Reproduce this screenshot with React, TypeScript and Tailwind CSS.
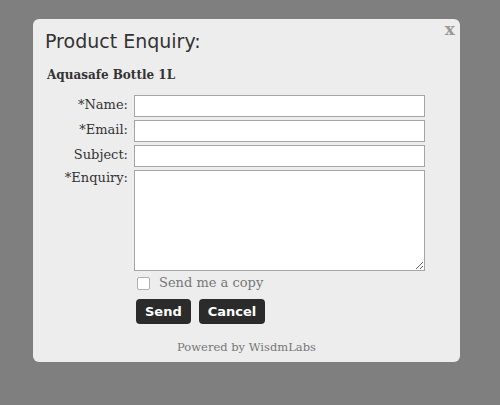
import React from "react";

const serif = { fontFamily: '"DejaVu Serif", "Liberation Serif", serif' };
const sans = { fontFamily: '"DejaVu Sans", "Liberation Sans", sans-serif' };

function Row({ label, children, top }: { label: string; children: React.ReactNode; top?: boolean }) {
  return (
    <div className={`flex ${top ? "items-start" : "items-center"} gap-[6px]`}>
      <label
        className={`w-[95px] shrink-0 text-right text-[13px] text-[#333] ${top ? "leading-[16px]" : "leading-[20px] -mt-[3px]"}`}
        style={serif}
      >
        {label}
      </label>
      {children}
    </div>
  );
}

export default function App() {
  return (
    <div className="w-[500px] h-[405px] bg-[#7f7f7f] pt-[19px] pl-[33px]">
      <div className="relative w-[427px] h-[343px] rounded-[6px] bg-[#ededed] flex flex-col">
        <span
          className="absolute top-[0px] right-[5px] text-[17px] font-bold leading-[20px] text-[#9a9a9a]"
          style={serif}
        >
          x
        </span>
        <div className="pt-[11px] pl-[12px] text-[19px] leading-[22px] text-[#333]" style={sans}>
          Product Enquiry:
        </div>
        <div className="mt-[15px] pl-[14px] text-[12px] font-bold leading-[16px] text-[#333]" style={serif}>
          Aquasafe Bottle 1L
        </div>
        <div className="mt-[12px] flex flex-col gap-[3px]">
          <Row label="*Name:">
            <input className="w-[291px] h-[22px] border border-[#a5a5a5] bg-white outline-none" />
          </Row>
          <Row label="*Email:">
            <input className="w-[291px] h-[22px] border border-[#a5a5a5] bg-white outline-none" />
          </Row>
          <Row label="Subject:">
            <input className="w-[291px] h-[22px] border border-[#a5a5a5] bg-white outline-none" />
          </Row>
          <Row label="*Enquiry:" top>
            <textarea className="w-[291px] h-[101px] border border-[#a5a5a5] bg-white outline-none block" />
          </Row>
        </div>
        <div className="mt-[5px] ml-[104px] flex items-center gap-[9px] h-[14px]">
          <span className="w-[13px] h-[13px] rounded-[2px] border border-[#b0b0b0] bg-white shrink-0" />
          <span className="text-[13px] leading-[16px] text-[#777]" style={serif}>
            Send me a copy
          </span>
        </div>
        <div className="mt-[9px] ml-[103px] flex gap-[8px]">
          <button
            className="h-[25px] px-[9px] rounded-[4px] bg-[#2b2b2b] text-white text-[13px] font-bold leading-[25px]"
            style={sans}
          >
            Send
          </button>
          <button
            className="h-[25px] px-[9px] rounded-[4px] bg-[#2b2b2b] text-white text-[13px] font-bold leading-[25px]"
            style={sans}
          >
            Cancel
          </button>
        </div>
        <div className="mt-[15px] text-center text-[11.5px] leading-[16px] text-[#777]" style={serif}>
          Powered by WisdmLabs
        </div>
      </div>
    </div>
  );
}
